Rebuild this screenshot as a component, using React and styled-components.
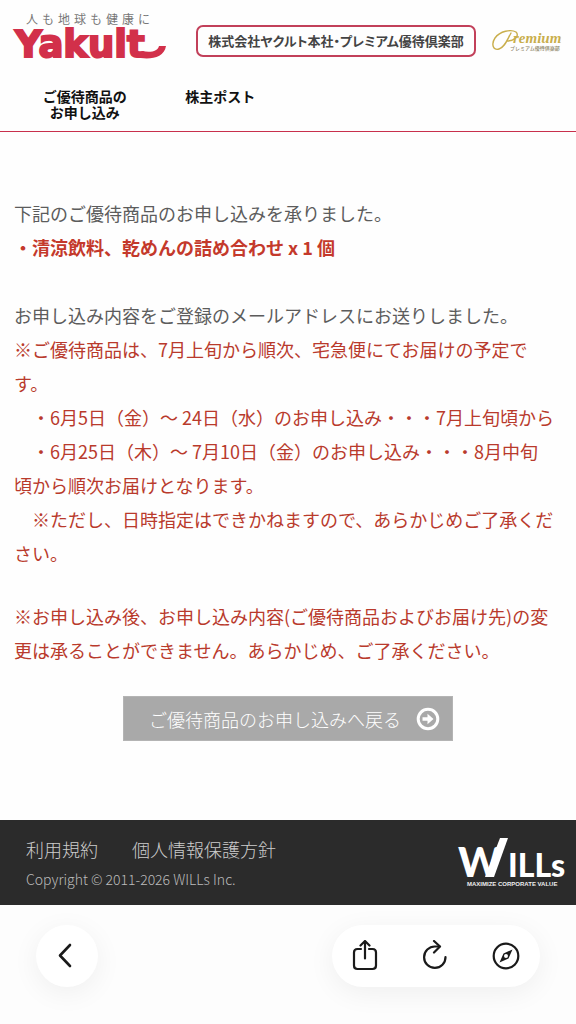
import styled, { createGlobalStyle } from "styled-components";

const GlobalStyle = createGlobalStyle`
  * {
    box-sizing: border-box;
  }

  body {
    margin: 0;
    background: #fefefe;
    color: #5c5c5c;
    font-family: "Noto Sans CJK JP", "Noto Sans", sans-serif;
    font-size: 18px;
    line-height: 34px;
  }
`;

const Header = styled.header`
  border-bottom: 1px solid #c8304c;
`;

const BrandRow = styled.div`
  display: flex;
  align-items: center;
  justify-content: space-between;
  padding: 12px 14px 0 12px;
`;

const YakultLink = styled.a`
  display: block;
  margin-right: 14px;
  padding-bottom: 10px;
  text-decoration: none;
`;

const Tagline = styled.span`
  display: block;
  padding-left: 14px;
  color: #777;
  font-size: 12px;
  line-height: 14px;
  letter-spacing: 4px;
`;

const LogoSvg = styled.svg`
  display: block;
  overflow: visible;
`;

const ClubName = styled.h1`
  margin: 0;
  padding: 0 10px;
  border: 2px solid #c2405a;
  border-radius: 7px;
  color: #444;
  font-size: 13px;
  font-weight: 700;
  line-height: 28px;
  font-feature-settings: "palt";
  white-space: nowrap;
`;

const Nav = styled.nav`
  display: flex;
  padding: 18px 17px 11px;
`;

const NavLink = styled.a`
  flex: 0 0 25%;
  color: #111;
  font-size: 14px;
  font-weight: 700;
  line-height: 16px;
  text-align: center;
  text-decoration: none;
`;

const Main = styled.main`
  padding: 64px 14px 79px;
`;

const Message = styled.p`
  margin: 0 0 ${(props) => props.$gap || 0}px;
  color: ${(props) => (props.$notice ? "#b93a2c" : "#5c5c5c")};
`;

const Item = styled.strong`
  color: #c4392b;
  font-weight: 700;
`;

const BackButton = styled.button`
  display: flex;
  align-items: center;
  gap: 15px;
  margin: 0 auto;
  padding: 0 12px 0 25px;
  height: 45px;
  border: 1px solid #b4b4b4;
  background: #a9a9a9;
  color: #fff;
  font-family: inherit;
  font-size: 18px;
  font-weight: 300;
  cursor: pointer;
`;

const Footer = styled.footer`
  display: flex;
  justify-content: space-between;
  align-items: center;
  padding: 12px 12px 13px 26px;
  background: #2b2b2b;
  color: #ccc;
  font-weight: 300;
`;

const FooterLinks = styled.div`
  display: flex;
  gap: 34px;
`;

const FooterLink = styled.a`
  color: inherit;
  text-decoration: none;
`;

const Copyright = styled.small`
  display: block;
  color: #bbb;
  font-size: 14px;
  line-height: 26px;
`;

const BrowserBar = styled.div`
  display: flex;
  justify-content: space-between;
  padding: 20px 36px 37px;
  background: #fdfdfd;
`;

const ToolGroup = styled.div`
  display: flex;
  justify-content: center;
  border-radius: 31px;
  background: #fff;
  box-shadow: 0 6px 28px rgba(0, 0, 0, 0.06);
`;

const ToolButton = styled.button`
  display: grid;
  place-items: center;
  width: ${(props) => props.$width || 62}px;
  height: 62px;
  padding: 0;
  border: 0;
  background: none;
  color: #1a1a1a;
  cursor: pointer;
`;

const Icon = ({ size = 32, children }) => (
  <svg
    width={size}
    height={size}
    viewBox={`0 0 ${size} ${size}`}
    fill="none"
    stroke="currentColor"
    strokeWidth="2.2"
    strokeLinecap="round"
    strokeLinejoin="round"
    aria-hidden="true"
  >
    {children}
  </svg>
);

const YakultLogo = () => (
  <LogoSvg width="154" height="34" viewBox="0 0 154 34" role="img" aria-label="Yakult">
    <text
      x="3"
      y="31"
      fill="#d2304a"
      stroke="#d2304a"
      strokeWidth="2"
      fontFamily="'DejaVu Sans', sans-serif"
      fontSize="37"
      fontWeight="700"
    >
      Yakult
    </text>
    <path d="M123 31 C136 34 152 33 154 20 L147 20 C146 25 139 27 130 25 Z" fill="#d2304a" />
  </LogoSvg>
);

const PremiumLogo = () => (
  <LogoSvg width="70" height="24" viewBox="0 0 70 24" role="img" aria-label="Premium">
    <path
      d="M19 4 C15 11 13 18 7 20 C1 22 -1 15 3 9 C8 2 19 0 24 3 C28 7 22 12 15 12"
      fill="none"
      stroke="#c9ae4c"
      strokeWidth="1.4"
      strokeLinecap="round"
    />
    <text
      x="21"
      y="14"
      fill="#c9ae4c"
      fontFamily="'Liberation Serif', serif"
      fontSize="15"
      fontStyle="italic"
      fontWeight="700"
    >
      remium
    </text>
    <text x="18" y="21" fill="#8c8468" fontSize="5" fontWeight="500">
      プレミアム優待倶楽部
    </text>
  </LogoSvg>
);

const WillsLogo = () => (
  <LogoSvg width="106" height="50" viewBox="0 0 106 50" role="img" aria-label="WILLs">
    <g fill="#fff" fontFamily="Lato, sans-serif" fontWeight="900">
      <text x="0" y="40" fontSize="41">
        W
      </text>
      <path d="M27 40 L36 40 L50 1 L42 1 Z" />
      <text x="50" y="40" fontSize="32">
        ILLs
      </text>
    </g>
    <text
      x="9"
      y="49"
      fill="#eee"
      fontFamily="'Liberation Sans', sans-serif"
      fontSize="6"
      fontWeight="700"
    >
      MAXIMIZE CORPORATE VALUE
    </text>
  </LogoSvg>
);

const App = () => (
  <>
    <GlobalStyle />
    <Header>
      <BrandRow>
        <YakultLink href="#top">
          <Tagline>人も地球も健康に</Tagline>
          <YakultLogo />
        </YakultLink>
        <ClubName>株式会社ヤクルト本社・プレミアム優待倶楽部</ClubName>
        <PremiumLogo />
      </BrandRow>
      <Nav>
        <NavLink href="#apply">
          ご優待商品の
          <br />
          お申し込み
        </NavLink>
        <NavLink href="#post">株主ポスト</NavLink>
      </Nav>
    </Header>

    <Main>
      <Message $gap={34}>
        下記のご優待商品のお申し込みを承りました。
        <br />
        <Item>・清涼飲料、乾めんの詰め合わせ x 1 個</Item>
      </Message>
      <Message>お申し込み内容をご登録のメールアドレスにお送りしました。</Message>
      <Message $notice $gap={29}>
        ※ご優待商品は、7月上旬から順次、宅急便にてお届けの予定で
        <br />
        す。
        <br />
        {"\u3000"}・6月5日（金）～ 24日（水）のお申し込み・・・7月上旬頃から
        <br />
        {"\u3000"}・6月25日（木）～ 7月10日（金）のお申し込み・・・8月中旬
        <br />
        頃から順次お届けとなります。
        <br />
        {"\u3000"}※ただし、日時指定はできかねますので、あらかじめご了承くだ
        <br />
        さい。
      </Message>
      <Message $notice $gap={29}>
        ※お申し込み後、お申し込み内容(ご優待商品およびお届け先)の変
        <br />
        更は承ることができません。あらかじめ、ご了承ください。
      </Message>
      <BackButton type="button">
        ご優待商品のお申し込みへ戻る
        <Icon size={24}>
          <circle cx="12" cy="12" r="9.8" strokeWidth="3" />
          <path
            d="M6.5 10.3 H11.5 V6.8 L17.5 12 L11.5 17.2 V13.7 H6.5 Z"
            fill="currentColor"
            stroke="none"
          />
        </Icon>
      </BackButton>
    </Main>

    <Footer>
      <div>
        <FooterLinks>
          <FooterLink href="#terms">利用規約</FooterLink>
          <FooterLink href="#privacy">個人情報保護方針</FooterLink>
        </FooterLinks>
        <Copyright>Copyright © 2011-2026 WILLs Inc.</Copyright>
      </div>
      <WillsLogo />
    </Footer>

    <BrowserBar>
      <ToolGroup>
        <ToolButton type="button" aria-label="戻る">
          <Icon>
            <path d="M19 5 L9 15.5 L19 26" strokeWidth="2.6" />
          </Icon>
        </ToolButton>
      </ToolGroup>
      <ToolGroup>
        <ToolButton type="button" aria-label="共有" $width={66}>
          <Icon>
            <path d="M12 9 H8.5 Q5 9 5 12.5 V25.5 Q5 29 8.5 29 H23.5 Q27 29 27 25.5 V12.5 Q27 9 23.5 9 H20" />
            <path d="M16 18.5 V1.5 M11.5 5.5 L16 1 L20.5 5.5" />
          </Icon>
        </ToolButton>
        <ToolButton type="button" aria-label="再読み込み" $width={74}>
          <Icon>
            <path d="M20.5 6.5 H16 A10.7 10.7 0 1 0 26.5 17" />
            <path d="M15 1 L21 6.5 L15 12.5" />
          </Icon>
        </ToolButton>
        <ToolButton type="button" aria-label="ブラウザで開く" $width={68}>
          <Icon>
            <circle cx="16" cy="16" r="12.3" />
            <path
              fillRule="evenodd"
              d="M22.5 9.5 L18.5 18.5 L9.5 22.5 L13.5 13.5 Z M16 14 A2 2 0 1 0 16 18 A2 2 0 1 0 16 14 Z"
              fill="currentColor"
              stroke="none"
            />
          </Icon>
        </ToolButton>
      </ToolGroup>
    </BrowserBar>
  </>
);

export default App;
